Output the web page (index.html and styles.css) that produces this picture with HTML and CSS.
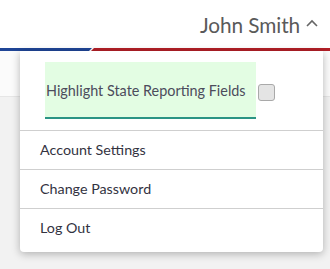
FILE: index.html
```html
<!DOCTYPE html>
<html lang="en">
<head>
  <meta charset="UTF-8" />
  <title>User Menu</title>
  <link rel="stylesheet" href="styles.css">
</head>
<body>
  <header class="topbar">
    <div class="user-toggle">
      <span class="user-name">John Smith</span>
      <svg class="caret" width="12" height="8" viewBox="0 0 12 8"><path d="M1 7 L6 2 L11 7" fill="none" stroke="#666" stroke-width="1.6"/></svg>
    </div>
  </header>
  <div class="stripe">
    <div class="stripe-blue"></div>
    <div class="stripe-red"></div>
  </div>
  <div class="subbar"></div>
  <main class="page"></main>

  <div class="user-menu">
    <div class="menu-top">
      <label class="highlight-field">
        <span class="highlight-text">Highlight State Reporting Fields</span>
      </label>
      <input type="checkbox" class="highlight-check" />
    </div>
    <ul class="menu-list">
      <li>Account Settings</li>
      <li>Change Password</li>
      <li>Log Out</li>
    </ul>
  </div>
</body>
</html>
```

FILE: styles.css
```css
:root {
  --blue: #1f4596;
  --red: #b21f27;
  --text: #3a3a46;
  --line: #cfcfcf;
}

body {
  margin: 0;
  font-family: 'Lato', sans-serif;
  background: #f2f2f2;
  color: var(--text);
  position: relative;
  height: 269px;
  overflow: hidden;
}

.topbar {
  height: 48px;
  background: #fff;
  display: flex;
  justify-content: flex-end;
  align-items: center;
  padding-right: 12px;
}

.user-toggle {
  display: flex;
  align-items: center;
  gap: 6px;
}

.user-name {
  font-size: 20.8px;
  color: #5a5a5a;
  letter-spacing: -0.1px;
}

.caret {
  margin-top: -2px;
}

.stripe {
  display: flex;
  height: 3px;
  background: #fff;
}

.stripe-blue {
  width: 92px;
  background: var(--blue);
  clip-path: polygon(0 0, 100% 0, calc(100% - 3px) 100%, 0 100%);
}

.stripe-red {
  flex: 1;
  margin-left: -1px;
  background: var(--red);
  clip-path: polygon(3px 0, 100% 0, 100% 100%, 0 100%);
}

.subbar {
  height: 45px;
  background: #fbfbfb;
  border-bottom: 1px solid #e6e6e6;
}

.user-menu {
  position: absolute;
  top: 51px;
  left: 20px;
  width: 303px;
  background: #fff;
  border-radius: 0 0 4px 4px;
  box-shadow: 0 2px 8px rgba(0, 0, 0, 0.28);
}

.menu-top {
  display: flex;
  align-items: center;
  padding: 11px 0 11px 25px;
  border-bottom: 1px solid var(--line);
}

.highlight-field {
  width: 210px;
  height: 55px;
  background: #e3fde3;
  border-bottom: 2px solid #2b9484;
  display: flex;
  align-items: center;
  padding-left: 1px;
}

.highlight-text {
  font-size: 14.4px;
  color: #4c4c5c;
  padding-top: 1px;
  white-space: nowrap;
}

.highlight-check {
  appearance: none;
  width: 17px;
  height: 17px;
  margin: 0 0 0 2px;
  border: 1px solid #a9a9a9;
  border-radius: 3px;
  background: #e4e4e4;
  position: relative;
  top: 2px;
}

.menu-list {
  list-style: none;
  margin: 0;
  padding: 0 0 5px;
}

.menu-list li {
  height: 38px;
  line-height: 38px;
  padding-left: 20px;
  font-size: 14.3px;
  color: #33333f;
  border-bottom: 1px solid var(--line);
}

.menu-list li:last-child {
  border-bottom: none;
}
```
